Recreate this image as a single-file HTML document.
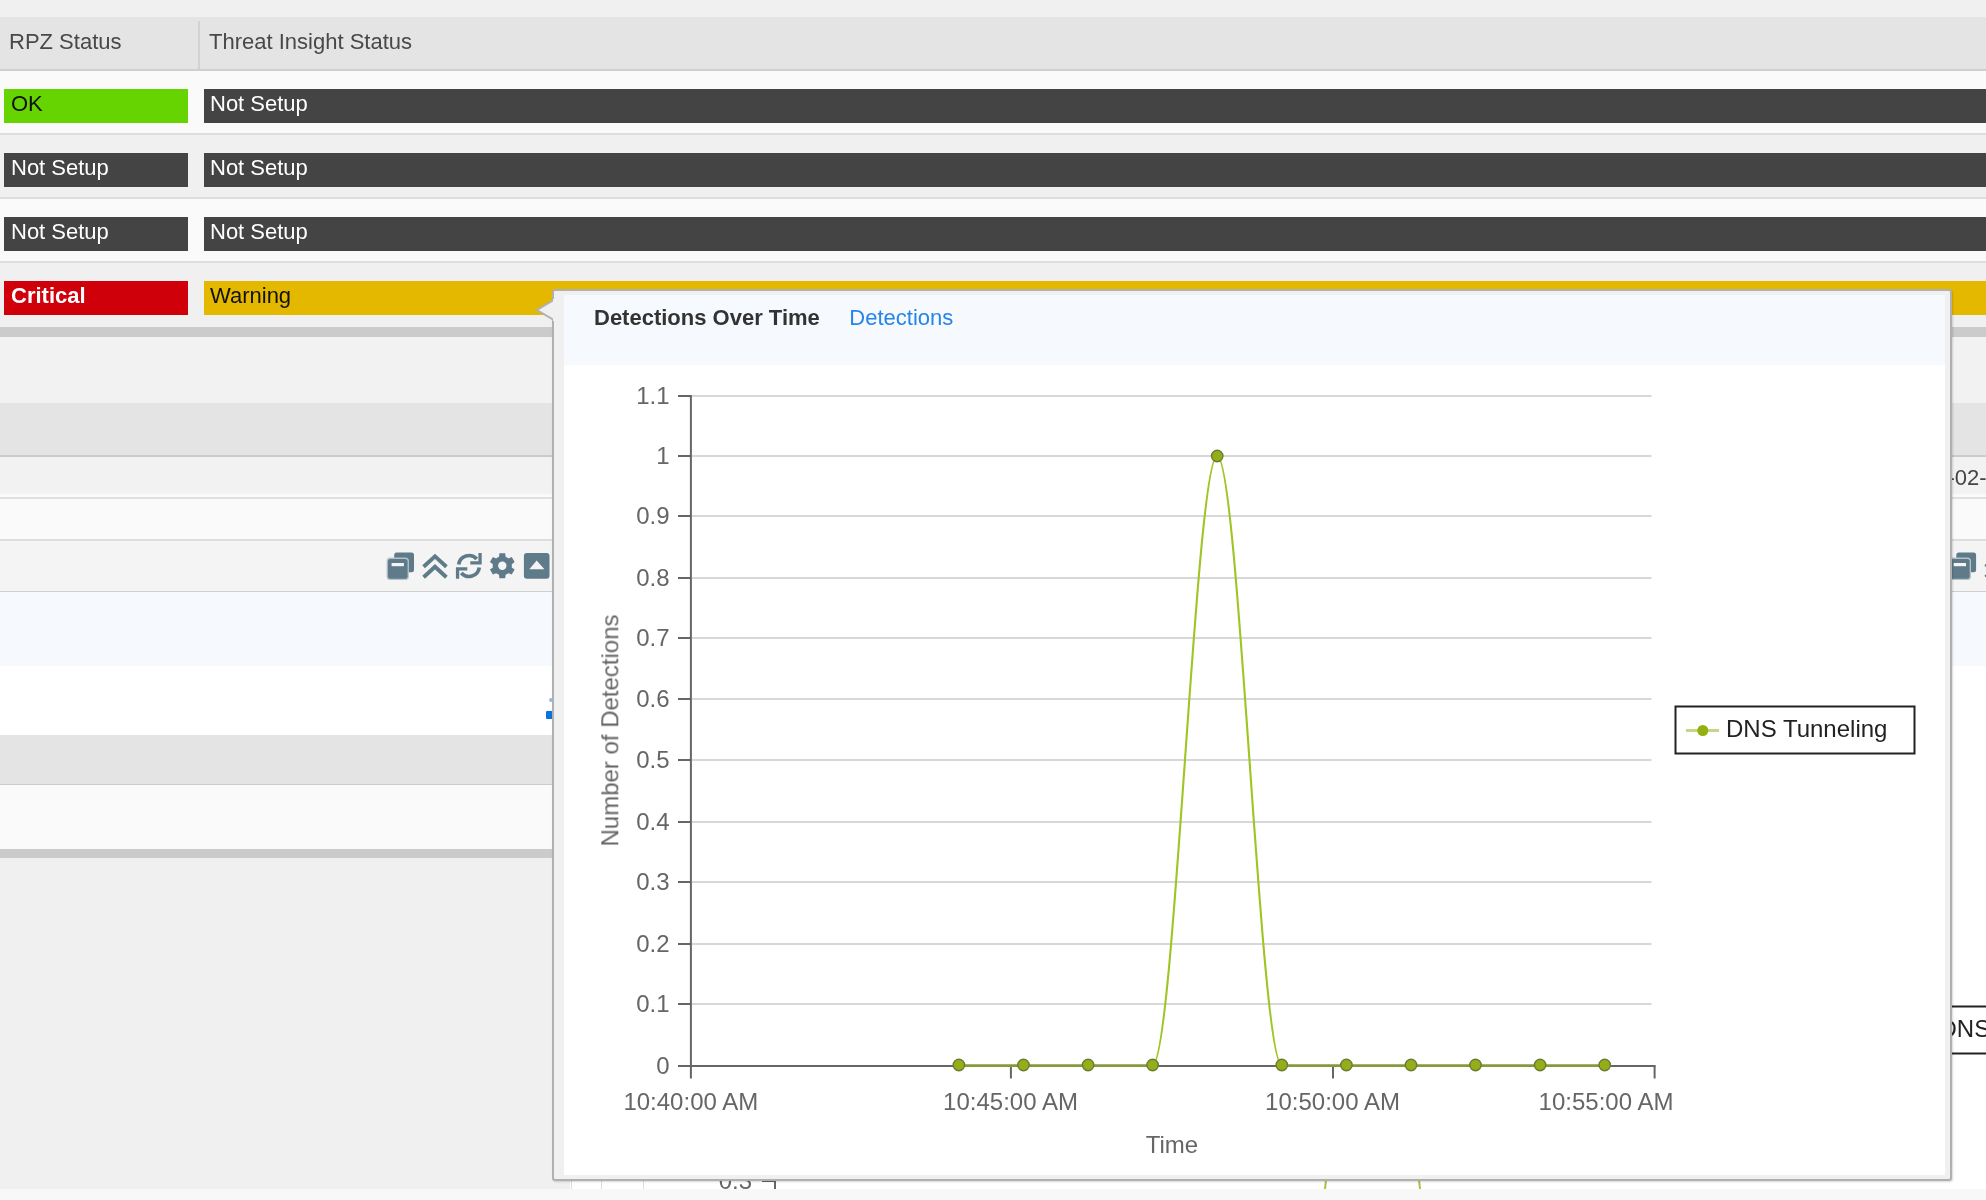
<!DOCTYPE html>
<html><head><meta charset="utf-8">
<style>
html,body{margin:0;padding:0;}
body{width:1986px;height:1200px;overflow:hidden;position:relative;background:#f0f0f0;font-family:"Liberation Sans",sans-serif;}
.a{position:absolute;}
.t{position:absolute;white-space:nowrap;font-size:22px;line-height:26px;filter:blur(0.45px);}
.badge{position:absolute;height:34px;}
.bt{position:absolute;white-space:nowrap;font-size:22px;line-height:26px;top:1.5px;left:7px;filter:blur(0.45px);}
svg text{filter:blur(0.45px);}
</style></head><body>
<!-- header -->
<div class="a" style="left:0;top:17px;width:1986px;height:52px;background:#e4e4e4;"></div>
<div class="a" style="left:0;top:69px;width:1986px;height:2px;background:#cfcfcf;"></div>
<div class="a" style="left:198px;top:21px;width:2px;height:48px;background:#d2d2d2;"></div>
<div class="t" style="left:9px;top:28.5px;color:#484848;">RPZ Status</div>
<div class="t" style="left:209px;top:28.5px;color:#484848;">Threat Insight Status</div>
<!-- rows -->
<div class="a" style="left:0;top:71px;width:1986px;height:62px;background:#fafafa;"></div>
<div class="a" style="left:0;top:133px;width:1986px;height:2px;background:#dedede;"></div>
<div class="a" style="left:0;top:135px;width:1986px;height:62px;background:#f0f0f0;"></div>
<div class="a" style="left:0;top:197px;width:1986px;height:2px;background:#dedede;"></div>
<div class="a" style="left:0;top:199px;width:1986px;height:62px;background:#fafafa;"></div>
<div class="a" style="left:0;top:261px;width:1986px;height:2px;background:#dedede;"></div>
<div class="a" style="left:0;top:263px;width:1986px;height:64px;background:#f0f0f0;"></div>
<div class="a" style="left:0;top:327px;width:1986px;height:10px;background:#cbcbcb;"></div>

<div class="badge" style="left:4px;top:89px;width:184px;background:#66d400;"><span class="bt" style="color:#111;">OK</span></div>
<div class="badge" style="left:204px;top:89px;width:1782px;background:#444;"><span class="bt" style="color:#fff;left:6px">Not Setup</span></div>
<div class="badge" style="left:4px;top:153px;width:184px;background:#444;"><span class="bt" style="color:#fff;">Not Setup</span></div>
<div class="badge" style="left:204px;top:153px;width:1782px;background:#444;"><span class="bt" style="color:#fff;left:6px">Not Setup</span></div>
<div class="badge" style="left:4px;top:217px;width:184px;background:#444;"><span class="bt" style="color:#fff;">Not Setup</span></div>
<div class="badge" style="left:204px;top:217px;width:1782px;background:#444;"><span class="bt" style="color:#fff;left:6px">Not Setup</span></div>
<div class="badge" style="left:4px;top:281px;width:184px;background:#d0000b;"><span class="bt" style="color:#fff;font-weight:bold;">Critical</span></div>
<div class="badge" style="left:204px;top:281px;width:1782px;background:#e5b800;"><span class="bt" style="color:#111;left:6px">Warning</span></div>

<!-- second section (full width rows) -->
<div class="a" style="left:0;top:337px;width:1986px;height:66px;background:#f2f2f2;"></div>
<div class="a" style="left:0;top:403px;width:1986px;height:52px;background:#e4e4e4;"></div>
<div class="a" style="left:0;top:455px;width:1986px;height:2px;background:#cbcbcb;"></div>
<div class="a" style="left:0;top:457px;width:1986px;height:37px;background:#f2f2f2;"></div>
<div class="a" style="left:0;top:494px;width:1986px;height:3px;background:#fafafa;"></div>
<div class="a" style="left:0;top:497px;width:1986px;height:2px;background:#e0e0e0;"></div>
<div class="a" style="left:0;top:499px;width:1986px;height:40px;background:#fafafa;"></div>
<div class="a" style="left:0;top:539px;width:1986px;height:2px;background:#dddddd;"></div>
<div class="a" style="left:0;top:541px;width:1986px;height:50px;background:#f4f4f4;"></div>
<div class="a" style="left:0;top:591px;width:1986px;height:1px;background:#cfcfcf;"></div>
<div class="a" style="left:0;top:592px;width:1986px;height:74px;background:#f6f9fe;"></div>
<div class="a" style="left:0;top:666px;width:1986px;height:523px;background:#ffffff;"></div>
<!-- left column lower part -->
<div class="a" style="left:0;top:735px;width:560px;height:49px;background:#e4e4e4;"></div>
<div class="a" style="left:0;top:784px;width:560px;height:1px;background:#cccccc;"></div>
<div class="a" style="left:0;top:785px;width:560px;height:64px;background:#fafafa;"></div>
<div class="a" style="left:0;top:849px;width:560px;height:9px;background:#cbcbcb;"></div>
<div class="a" style="left:0;top:858px;width:570px;height:331px;background:#f0f0f0;"></div>
<div class="a" style="left:546px;top:711px;width:8px;height:8px;background:#0a72e0;border-radius:1px;"></div>
<div class="a" style="left:549px;top:698px;width:4px;height:4px;background:#8cbdf0;border-radius:2px;"></div>
<!-- bottom strip -->
<div class="a" style="left:571px;top:1180px;width:1px;height:9px;background:#dcdcdc;"></div>
<div class="a" style="left:601px;top:1180px;width:1px;height:9px;background:#dcdcdc;"></div>
<div class="a" style="left:643px;top:1180px;width:1px;height:9px;background:#dcdcdc;"></div>
<div class="a" style="left:0;top:1189px;width:1986px;height:11px;background:#f8f8f8;"></div>
<!-- right side date text -->
<div class="t" style="left:1898.6px;top:465px;color:#444;">2024-02-15</div>

<svg class="a" style="left:0;top:0" width="1986" height="1200" font-family="Liberation Sans" font-size="24">
<rect x="394.2" y="552.6" width="19.8" height="19.7" rx="2.5" fill="#5f7b8a"/>
<rect x="386.6" y="557.6" width="22.3" height="22.5" rx="3.5" fill="#b4c2c9"/>
<rect x="387.9" y="558.9" width="19.7" height="19.9" rx="2.5" fill="#5f7b8a"/>
<rect x="391.6" y="563" width="12.3" height="3.2" fill="#f4f4f4"/>
<path d="M423.6 566.8 L435 556.3 L446.4 566.8 M423.6 577.2 L435 566.7 L446.4 577.2" fill="none" stroke="#5f7b8a" stroke-width="3.9" stroke-linecap="butt" stroke-linejoin="miter"/>
<path d="M458.70 564.55 A10.4 10.4 0 0 1 476.73 559.04" fill="none" stroke="#5f7b8a" stroke-width="3.7"/>
<path d="M478.4 553 H481.7 V564.5 H470.3 V561.2 H478.4 Z" fill="#5f7b8a"/>
<path d="M479.30 567.45 A10.4 10.4 0 0 1 461.27 572.96" fill="none" stroke="#5f7b8a" stroke-width="3.7"/>
<path d="M455.9 567.3 H467.3 V570.6 H459.2 V578.7 H455.9 Z" fill="#5f7b8a"/>
<path d="M497.50 557.49 L499.02 556.78 L499.40 553.23 L505.20 553.23 L505.58 556.78 L507.10 557.49 L508.47 558.45 L511.73 557.00 L514.64 562.03 L511.75 564.13 L511.90 565.80 L511.75 567.47 L514.64 569.57 L511.73 574.60 L508.47 573.15 L507.10 574.11 L505.58 574.82 L505.20 578.37 L499.40 578.37 L499.02 574.82 L497.50 574.11 L496.13 573.15 L492.87 574.60 L489.96 569.57 L492.85 567.47 L492.70 565.80 L492.85 564.13 L489.96 562.03 L492.87 557.00 L496.13 558.45 Z" fill="#5f7b8a"/>
<circle cx="502.3" cy="565.8" r="4.2" fill="#f4f4f4"/>
<rect x="523.9" y="553" width="25.6" height="25.7" rx="3" fill="#5f7b8a"/>
<path d="M536.7 560.5 L544.4 569.2 L529.3 569.2 Z" fill="#f4f4f4"/>
<rect x="1956.3" y="552.6" width="19.8" height="19.7" rx="2.5" fill="#5f7b8a"/>
<rect x="1948.6999999999998" y="557.6" width="22.3" height="22.5" rx="3.5" fill="#b4c2c9"/>
<rect x="1950.0" y="558.9" width="19.7" height="19.9" rx="2.5" fill="#5f7b8a"/>
<rect x="1953.6999999999998" y="563" width="12.3" height="3.2" fill="#f4f4f4"/>
<path d="M1985.6999999999998 566.8 L1997.1 556.3 L2008.5 566.8 M1985.6999999999998 577.2 L1997.1 566.7 L2008.5 577.2" fill="none" stroke="#5f7b8a" stroke-width="3.9" stroke-linecap="butt" stroke-linejoin="miter"/>
<path d="M2020.80 564.55 A10.4 10.4 0 0 1 2038.83 559.04" fill="none" stroke="#5f7b8a" stroke-width="3.7"/>
<path d="M2040.5 553 H2043.8 V564.5 H2032.3999999999999 V561.2 H2040.5 Z" fill="#5f7b8a"/>
<path d="M2041.40 567.45 A10.4 10.4 0 0 1 2023.37 572.96" fill="none" stroke="#5f7b8a" stroke-width="3.7"/>
<path d="M2018.0 567.3 H2029.3999999999999 V570.6 H2021.3 V578.7 H2018.0 Z" fill="#5f7b8a"/>
<path d="M2059.60 557.49 L2061.12 556.78 L2061.50 553.23 L2067.30 553.23 L2067.68 556.78 L2069.20 557.49 L2070.57 558.45 L2073.83 557.00 L2076.74 562.03 L2073.85 564.13 L2074.00 565.80 L2073.85 567.47 L2076.74 569.57 L2073.83 574.60 L2070.57 573.15 L2069.20 574.11 L2067.68 574.82 L2067.30 578.37 L2061.50 578.37 L2061.12 574.82 L2059.60 574.11 L2058.23 573.15 L2054.97 574.60 L2052.06 569.57 L2054.95 567.47 L2054.80 565.80 L2054.95 564.13 L2052.06 562.03 L2054.97 557.00 L2058.23 558.45 Z" fill="#5f7b8a"/>
<circle cx="2064.4" cy="565.8" r="4.2" fill="#f4f4f4"/>
<rect x="2086.0" y="553" width="25.6" height="25.7" rx="3" fill="#5f7b8a"/>
<path d="M2098.8 560.5 L2106.5 569.2 L2091.3999999999996 569.2 Z" fill="#f4f4f4"/>
<!-- background chart peeking -->
<text x="752" y="1188.5" text-anchor="end" fill="#666">0.3</text>
<line x1="762" y1="1181" x2="776" y2="1181" stroke="#666" stroke-width="2"/>
<line x1="775" y1="1181" x2="775" y2="1189" stroke="#666" stroke-width="2"/>
<line x1="1326" y1="1180" x2="1325" y2="1189" stroke="#a8c43a" stroke-width="2"/>
<line x1="1419" y1="1180" x2="1420" y2="1189" stroke="#a8c43a" stroke-width="2"/>
<rect x="1880" y="1006.5" width="240" height="47" fill="none" stroke="#222" stroke-width="2"/>
<text x="1939.5" y="1037" fill="#222">DNS Tunneling</text>
</svg>

<!-- popover -->
<div class="a" style="left:552px;top:289px;width:1396px;height:888px;border:2px solid #b0b0b0;border-radius:3px;background:#f0f0f0;box-shadow:1px 1px 2px rgba(0,0,0,0.15);"></div>
<div class="a" style="left:564px;top:295px;width:1381px;height:70px;background:#f6f9fe;"></div>
<div class="a" style="left:564px;top:365px;width:1381px;height:810px;background:#ffffff;"></div>
<div class="t" style="left:594px;top:304.7px;color:#333;font-weight:bold;">Detections Over Time</div>
<div class="t" style="left:849.3px;top:304.7px;color:#2685e6;">Detections</div>

<svg class="a" style="left:0;top:0" width="1986" height="1200" font-family="Liberation Sans" font-size="24">
 <path d="M553 300.5 L537 310 L553 319.5" fill="#f0f0f0" stroke="#b0b0b0" stroke-width="2"/>
 <rect x="553" y="299" width="4" height="22" fill="#f0f0f0"/>
</svg>
<svg class="a" style="left:0;top:0" width="1986" height="1200" font-family="Liberation Sans" font-size="24" fill="#666">
<line x1="691.9" y1="1004" x2="1651.5" y2="1004" stroke="#d7d7d7" stroke-width="2"/>
<line x1="691.9" y1="944" x2="1651.5" y2="944" stroke="#d7d7d7" stroke-width="2"/>
<line x1="691.9" y1="882" x2="1651.5" y2="882" stroke="#d7d7d7" stroke-width="2"/>
<line x1="691.9" y1="822" x2="1651.5" y2="822" stroke="#d7d7d7" stroke-width="2"/>
<line x1="691.9" y1="760" x2="1651.5" y2="760" stroke="#d7d7d7" stroke-width="2"/>
<line x1="691.9" y1="699" x2="1651.5" y2="699" stroke="#d7d7d7" stroke-width="2"/>
<line x1="691.9" y1="638" x2="1651.5" y2="638" stroke="#d7d7d7" stroke-width="2"/>
<line x1="691.9" y1="578" x2="1651.5" y2="578" stroke="#d7d7d7" stroke-width="2"/>
<line x1="691.9" y1="516" x2="1651.5" y2="516" stroke="#d7d7d7" stroke-width="2"/>
<line x1="691.9" y1="456" x2="1651.5" y2="456" stroke="#d7d7d7" stroke-width="2"/>
<line x1="691.9" y1="396" x2="1651.5" y2="396" stroke="#d7d7d7" stroke-width="2"/>
<line x1="678" y1="1066" x2="690.9" y2="1066" stroke="#666" stroke-width="2"/>
<text x="669.5" y="1073.6" text-anchor="end">0</text>
<line x1="678" y1="1004" x2="690.9" y2="1004" stroke="#666" stroke-width="2"/>
<text x="669.5" y="1011.6" text-anchor="end">0.1</text>
<line x1="678" y1="944" x2="690.9" y2="944" stroke="#666" stroke-width="2"/>
<text x="669.5" y="951.6" text-anchor="end">0.2</text>
<line x1="678" y1="882" x2="690.9" y2="882" stroke="#666" stroke-width="2"/>
<text x="669.5" y="889.6" text-anchor="end">0.3</text>
<line x1="678" y1="822" x2="690.9" y2="822" stroke="#666" stroke-width="2"/>
<text x="669.5" y="829.6" text-anchor="end">0.4</text>
<line x1="678" y1="760" x2="690.9" y2="760" stroke="#666" stroke-width="2"/>
<text x="669.5" y="767.6" text-anchor="end">0.5</text>
<line x1="678" y1="699" x2="690.9" y2="699" stroke="#666" stroke-width="2"/>
<text x="669.5" y="706.6" text-anchor="end">0.6</text>
<line x1="678" y1="638" x2="690.9" y2="638" stroke="#666" stroke-width="2"/>
<text x="669.5" y="645.6" text-anchor="end">0.7</text>
<line x1="678" y1="578" x2="690.9" y2="578" stroke="#666" stroke-width="2"/>
<text x="669.5" y="585.6" text-anchor="end">0.8</text>
<line x1="678" y1="516" x2="690.9" y2="516" stroke="#666" stroke-width="2"/>
<text x="669.5" y="523.6" text-anchor="end">0.9</text>
<line x1="678" y1="456" x2="690.9" y2="456" stroke="#666" stroke-width="2"/>
<text x="669.5" y="463.6" text-anchor="end">1</text>
<line x1="678" y1="396" x2="690.9" y2="396" stroke="#666" stroke-width="2"/>
<text x="669.5" y="403.6" text-anchor="end">1.1</text>
<line x1="690.9" y1="395" x2="690.9" y2="1078.5" stroke="#666" stroke-width="2"/>
<line x1="678" y1="1066" x2="1655.6" y2="1066" stroke="#666" stroke-width="2"/>
<line x1="1010.9" y1="1066" x2="1010.9" y2="1078.5" stroke="#666" stroke-width="2"/>
<line x1="1333.0" y1="1066" x2="1333.0" y2="1078.5" stroke="#666" stroke-width="2"/>
<line x1="1654.6" y1="1066" x2="1654.6" y2="1078.5" stroke="#666" stroke-width="2"/>
<text x="690.8" y="1109.5" text-anchor="middle">10:40:00 AM</text>
<text x="1010.5" y="1109.5" text-anchor="middle">10:45:00 AM</text>
<text x="1332.5" y="1109.5" text-anchor="middle">10:50:00 AM</text>
<text x="1606" y="1109.5" text-anchor="middle">10:55:00 AM</text>
<text x="1172" y="1152.5" text-anchor="middle">Time</text>
<text transform="translate(618.3,730.5) rotate(-90)" text-anchor="middle">Number of Detections</text>
<path d="M958.9 1065.6 L1023.5 1065.6 M1023.5 1065.6 L1088.1 1065.6 M1088.1 1065.6 L1152.6 1065.6 M1281.8 1065.6 L1346.4 1065.6 M1346.4 1065.6 L1411.0 1065.6 M1411.0 1065.6 L1475.5 1065.6 M1475.5 1065.6 L1540.1 1065.6 M1540.1 1065.6 L1604.7 1065.6 " fill="none" stroke="#869a3c" stroke-width="2.6"/>
<path d="M1152.6 1065.0 C1174.2 1065.0 1195.7 456.0 1217.2 456.0 M1217.2 456.0 C1238.7 456.0 1260.3 1065.0 1281.8 1065.0 " fill="none" stroke="#a0c425" stroke-width="2.1"/>
<circle cx="958.9" cy="1065.0" r="5.7" fill="#93ae17" stroke="#6b7b35" stroke-width="1.4"/>
<circle cx="1023.5" cy="1065.0" r="5.7" fill="#93ae17" stroke="#6b7b35" stroke-width="1.4"/>
<circle cx="1088.1" cy="1065.0" r="5.7" fill="#93ae17" stroke="#6b7b35" stroke-width="1.4"/>
<circle cx="1152.6" cy="1065.0" r="5.7" fill="#93ae17" stroke="#6b7b35" stroke-width="1.4"/>
<circle cx="1217.2" cy="456.0" r="5.7" fill="#93ae17" stroke="#6b7b35" stroke-width="1.4"/>
<circle cx="1281.8" cy="1065.0" r="5.7" fill="#93ae17" stroke="#6b7b35" stroke-width="1.4"/>
<circle cx="1346.4" cy="1065.0" r="5.7" fill="#93ae17" stroke="#6b7b35" stroke-width="1.4"/>
<circle cx="1411.0" cy="1065.0" r="5.7" fill="#93ae17" stroke="#6b7b35" stroke-width="1.4"/>
<circle cx="1475.5" cy="1065.0" r="5.7" fill="#93ae17" stroke="#6b7b35" stroke-width="1.4"/>
<circle cx="1540.1" cy="1065.0" r="5.7" fill="#93ae17" stroke="#6b7b35" stroke-width="1.4"/>
<circle cx="1604.7" cy="1065.0" r="5.7" fill="#93ae17" stroke="#6b7b35" stroke-width="1.4"/>
<rect x="1675.5" y="706.5" width="239" height="47" fill="none" stroke="#222" stroke-width="2"/>
<line x1="1686" y1="730.5" x2="1719" y2="730.5" stroke="#c2d78a" stroke-width="3"/>
<circle cx="1702.8" cy="730.5" r="5.5" fill="#93b010"/>
<text x="1726" y="737" fill="#222">DNS Tunneling</text>
</svg>
</body></html>
